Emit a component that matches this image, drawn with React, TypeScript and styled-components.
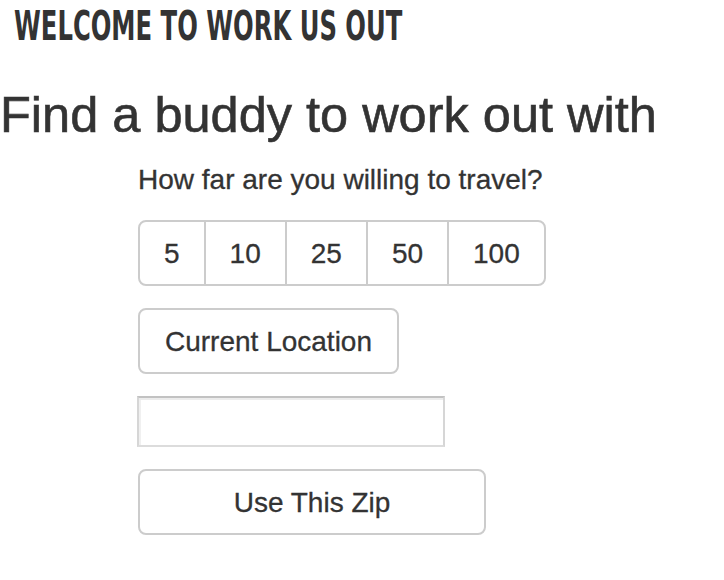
import React, { useState } from 'react';
import styled, { createGlobalStyle } from 'styled-components';

const GlobalStyle = createGlobalStyle`
  html, body {
    margin: 0;
    padding: 0;
    background: #fff;
  }
  body {
    font-family: "Liberation Sans", Arial, sans-serif;
    color: #333;
  }
`;

const distances = [5, 10, 25, 50, 100];

const App = () => {
  const [zip, setZip] = useState('');
  const [miles, setMiles] = useState<number | null>(null);

  return (
    <>
      <GlobalStyle />
      <Page>
        <Brand>
          <BrandText>WELCOME TO WORK US OUT</BrandText>
        </Brand>
        <Title>Find a buddy to work out with</Title>
        <Form>
          <Question>How far are you willing to travel?</Question>
          <Group>
            {distances.map((d) => (
              <GroupButton key={d} active={miles === d} onClick={() => setMiles(d)}>
                {d}
              </GroupButton>
            ))}
          </Group>
          <Button>Current Location</Button>
          <ZipInput type='text' value={zip} onChange={(e) => setZip(e.target.value)} />
          <Button wide>Use This Zip</Button>
        </Form>
      </Page>
    </>
  );
};

export default App;

const Page = styled.div`
  display: flex;
  flex-direction: column;
  padding-top: 6px;
`;

const Brand = styled.header`
  height: 40px;
  padding-left: 14px;
  margin-bottom: 44px;
`;

const BrandText = styled.h2`
  display: inline-block;
  margin: 0;
  font-family: "Liberation Sans Narrow", "DejaVu Sans Condensed", "Liberation Sans", sans-serif;
  font-weight: 700;
  font-size: 40px;
  line-height: 1;
  color: #333;
  white-space: nowrap;
  transform: scaleX(0.675);
  transform-origin: left center;
`;

const Title = styled.h1`
  margin: 0;
  font-weight: 400;
  font-size: 50.5px;
  line-height: 1;
  color: #333;
  white-space: nowrap;
  -webkit-text-stroke: 0.6px #333;
`;

const Form = styled.div`
  display: flex;
  flex-direction: column;
  align-items: flex-start;
  gap: 22px;
  padding-left: 138px;
  margin-top: 25px;
`;

const Question = styled.p`
  margin: 0 0 4px;
  font-size: 28px;
  line-height: 1;
  color: #333;
  -webkit-text-stroke: 0.3px #333;
`;

const Group = styled.div`
  display: flex;
`;

const GroupButton = styled.button<{ active: boolean }>`
  font-family: "Liberation Sans", Arial, sans-serif;
  font-size: 28px;
  line-height: 40px;
  padding: 12px 24px 10px;
  color: #333;
  background: ${({ active }) => (active ? '#e6e6e6' : '#fff')};
  border: 2px solid #ccc;
  border-radius: 0;
  margin-left: -2px;
  cursor: pointer;
  -webkit-text-stroke: 0.3px #333;

  &:first-child {
    margin-left: 0;
    border-radius: 8px 0 0 8px;
  }
  &:last-child {
    border-radius: 0 8px 8px 0;
  }
`;

const Button = styled.button<{ wide?: boolean }>`
  font-family: "Liberation Sans", Arial, sans-serif;
  font-size: 28px;
  line-height: 40px;
  padding: 12px 25px 10px;
  width: ${({ wide }) => (wide ? '348px' : 'auto')};
  color: #333;
  background: #fff;
  border: 2px solid #ccc;
  border-radius: 8px;
  text-align: center;
  cursor: pointer;
  -webkit-text-stroke: 0.3px #333;
`;

const ZipInput = styled.input`
  box-sizing: border-box;
  width: 308px;
  height: 51px;
  margin-left: -1px;
  padding: 4px 8px;
  font-family: "Liberation Sans", Arial, sans-serif;
  font-size: 24px;
  color: #333;
  background: #fff;
  border-style: solid;
  border-width: 2px;
  border-color: #c2c2c2 #d6d6d6 #dcdcdc #d6d6d6;
  box-shadow: inset 0 2px 0 #ececec, inset 2px 0 0 #f0f0f0;
  border-radius: 0;
  outline: none;
`;
